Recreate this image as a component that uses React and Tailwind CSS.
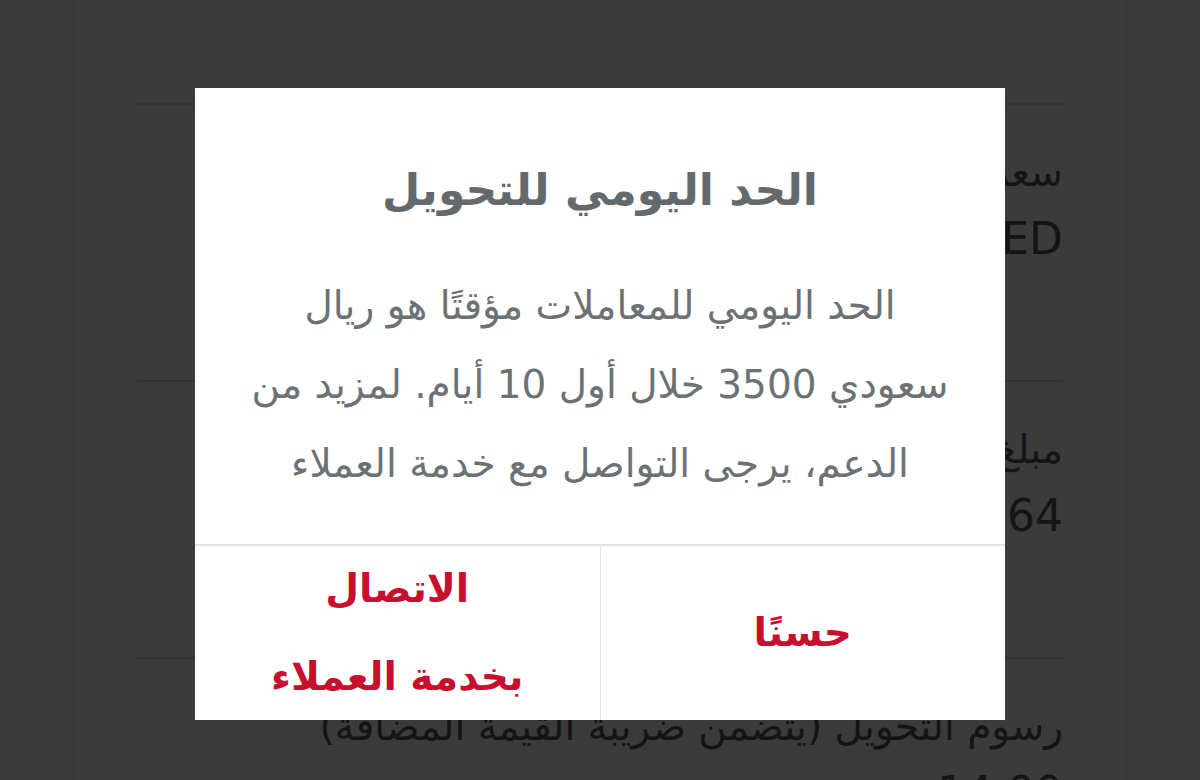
import React from 'react'

const rows = [
  { label: 'سعر الصرف', value: '1 SAR = 0.9794 AED' },
  { label: 'مبلغ التحويل', value: '3,427.64' },
  { label: 'رسوم التحويل (يتضمن ضريبة القيمة المضافة)', value: '14.00' },
]

export default function App() {
  return (
    <div
      dir="rtl"
      className="relative h-[780px] w-[1200px] overflow-hidden bg-[#3b3b3b]"
      style={{ fontFamily: '"DejaVu Sans", sans-serif' }}
    >
      {/* page behind the overlay */}
      <div className="mx-[73px] h-full border-x-2 border-[#373737] px-[62px]">
        <div className="h-[103px]" />
        {rows.map((row, i) => (
          <div key={i} className="flex h-[277px] flex-col border-t-2 border-[#333333] pt-[42px]">
            <div className="text-[39px] leading-[52px] text-[#141414]">{row.label}</div>
            <div className="mt-[14px] text-[44px] leading-[52px] text-[#141414]" dir="ltr" style={{ textAlign: 'right' }}>
              {row.value}
            </div>
          </div>
        ))}
      </div>

      {/* dialog */}
      <div className="absolute left-[195px] top-[88px] flex h-[632px] w-[810px] flex-col bg-white">
        <div className="flex flex-1 flex-col items-center px-4 pt-[64px] text-center">
          <h2 className="text-[44px] font-bold leading-[76px] text-[#63696c]">الحد اليومي للتحويل</h2>
          <p className="mt-[38px] text-[39px] leading-[79px] text-[#6c7174]">
            الحد اليومي للمعاملات مؤقتًا هو ريال
            <br />
            سعودي 3500 خلال أول 10 أيام. لمزيد من
            <br />
            الدعم، يرجى التواصل مع خدمة العملاء
          </p>
        </div>
        <div className="flex h-[176px] border-t-2 border-[#e3e3e3]">
          <button className="flex flex-1 items-center justify-center border-l border-[#e6e6e6] text-[39px] font-bold text-[#c8102e]">
            حسنًا
          </button>
          <button className="flex flex-1 flex-col items-center justify-center text-[39px] font-bold leading-[88px] text-[#c8102e]">
            <span>الاتصال</span>
            <span>بخدمة العملاء</span>
          </button>
        </div>
      </div>
    </div>
  )
}
